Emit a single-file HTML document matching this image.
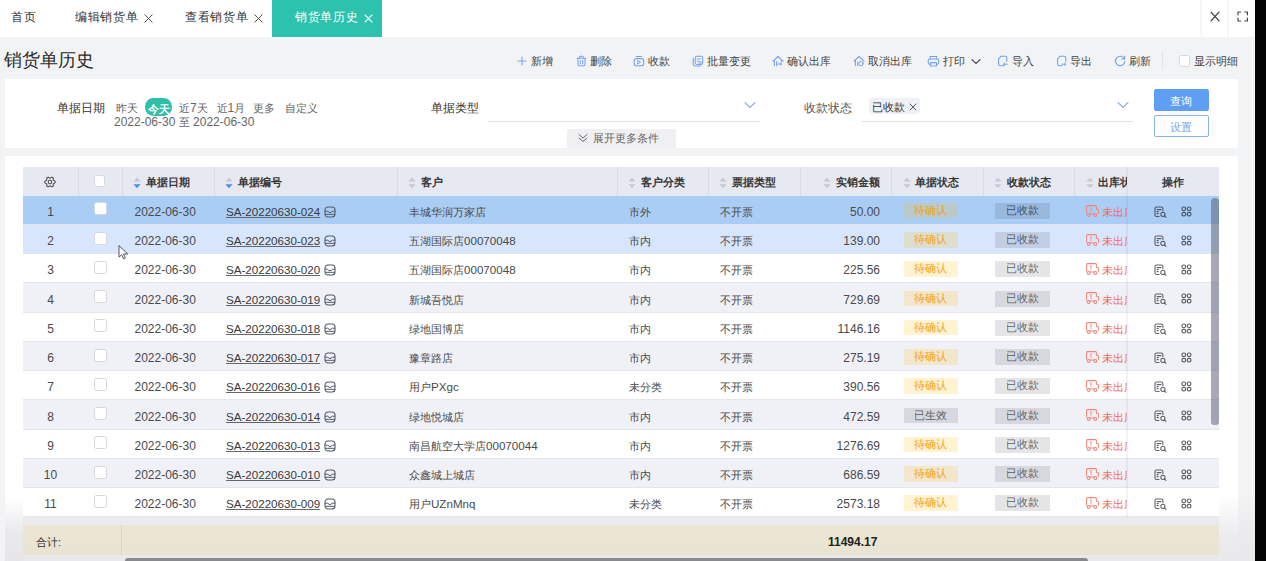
<!DOCTYPE html><html><head><meta charset="utf-8"><style>
*{margin:0;padding:0;box-sizing:border-box}
html,body{width:1266px;height:561px;overflow:hidden;background:#f2f3f5;font-family:"Liberation Sans",sans-serif;color:#333}
div,svg{position:absolute}
.t{white-space:nowrap;font-size:11px;line-height:14px}
.tab{white-space:nowrap;font-size:12px;line-height:15px;color:#333;letter-spacing:0.7px}
.hd{white-space:nowrap;font-size:11px;line-height:14px;font-weight:bold;color:#383838}
.cell{white-space:nowrap;font-size:11px;line-height:14px;color:#4a4a4a}
.tag{font-size:11px;line-height:15.5px;text-align:center;white-space:nowrap}
.cb{background:#fff;border:1px solid #d6d8de;border-radius:2.5px}
</style></head><body>
<div style="left:0px;top:0px;width:1255px;height:37px;background:#fff"></div>
<div class="tab" style="left:11px;top:10.4px;">首页</div>
<div class="tab" style="left:75px;top:10.4px;">编辑销货单</div>
<svg style="left:143.5px;top:14px;" width="9" height="9" viewBox="0 0 9 9" fill="none" stroke-linecap="round" stroke-linejoin="round"><path d="M0.8 0.8L8.2 8.2M8.2 0.8L0.8 8.2" stroke="#555" stroke-width="1"/></svg>
<div class="tab" style="left:185px;top:10.4px;">查看销货单</div>
<svg style="left:253.5px;top:14px;" width="9" height="9" viewBox="0 0 9 9" fill="none" stroke-linecap="round" stroke-linejoin="round"><path d="M0.8 0.8L8.2 8.2M8.2 0.8L0.8 8.2" stroke="#555" stroke-width="1"/></svg>
<div style="left:271.5px;top:0px;width:110px;height:37px;background:#2dc2ae"></div>
<div class="tab" style="left:295px;top:10.4px;color:#fff">销货单历史</div>
<svg style="left:363.5px;top:14px;" width="9" height="9" viewBox="0 0 9 9" fill="none" stroke-linecap="round" stroke-linejoin="round"><path d="M1 1L8 8M8 1L1 8" stroke="#e8faf6" stroke-width="1.1"/></svg>
<div style="left:1199.5px;top:0px;width:2px;height:37px;background:linear-gradient(90deg,#f4f4f4,#fafafa)"></div>
<div style="left:1227px;top:0px;width:2px;height:37px;background:linear-gradient(90deg,#f4f4f4,#fafafa)"></div>
<svg style="left:1210.2px;top:10.6px;" width="10" height="11" viewBox="0 0 10 11" fill="none" stroke-linecap="round" stroke-linejoin="round"><path d="M1 1.2L9 9.8M9 1.2L1 9.8" stroke="#333" stroke-width="1.15"/></svg>
<svg style="left:1236.6px;top:11px;" width="12" height="11" viewBox="0 0 12 11" fill="none" stroke-linecap="round" stroke-linejoin="round"><path d="M1 3.8V1H3.6M7.8 1H10.4V3.8M10.4 7.2V10H7.8M3.6 10H1V7.2" stroke="#444" stroke-width="1.2"/></svg>
<div style="left:1255.4px;top:0px;width:10.6px;height:561px;background:#040404"></div>
<div class="t" style="left:4px;top:50px;font-size:18px;line-height:21px;color:#2a2a2a">销货单历史</div>
<svg style="left:516.7px;top:55.8px;" width="10" height="10" viewBox="0 0 10 10" fill="none" stroke-linecap="round" stroke-linejoin="round"><path d="M5 1V9M1 5H9" stroke="#72a3ec" stroke-width="1.1"/></svg>
<div class="t" style="left:530.5px;top:53.7px;color:#444">新增</div>
<svg style="left:575.5px;top:54.6px;" width="11" height="12" viewBox="0 0 11 12" fill="none" stroke-linecap="round" stroke-linejoin="round"><path d="M3.6 3V2.2Q3.6 1.2 4.6 1.2H6.4Q7.4 1.2 7.4 2.2V3 M1 3.2H10 M2 3.6V9.6Q2 10.8 3.2 10.8H7.8Q9 10.8 9 9.6V3.6 M4.3 5.6V8.6 M6.7 5.6V8.6" stroke="#72a3ec" stroke-width="1.05"/></svg>
<div class="t" style="left:590px;top:53.7px;color:#444">删除</div>
<svg style="left:633.2px;top:54.7px;" width="12" height="12" viewBox="0 0 12 12" fill="none" stroke-linecap="round" stroke-linejoin="round"><path d="M3.2 1.5H8.8" stroke="#72a3ec" stroke-width="1.1"/><rect x="1.3" y="3.6" width="9.4" height="7.2" rx="2" stroke="#72a3ec" stroke-width="1.1"/><path d="M5 5.6L7.6 7.2L5 8.8Z" stroke="#72a3ec" stroke-width="0.9"/></svg>
<div class="t" style="left:648px;top:53.7px;color:#444">收款</div>
<svg style="left:691.5px;top:54.8px;" width="12" height="12" viewBox="0 0 12 12" fill="none" stroke-linecap="round" stroke-linejoin="round"><rect x="3.2" y="1.2" width="7.6" height="8.2" rx="1.6" stroke="#72a3ec" stroke-width="1.05"/><path d="M1.2 3.2V9.4Q1.2 11 2.8 11H8.6" stroke="#72a3ec" stroke-width="1.05"/><path d="M5.2 4H8.4M5.2 6.2H6.6" stroke="#72a3ec" stroke-width="0.9"/><circle cx="8" cy="7.6" r="1.3" stroke="#72a3ec" stroke-width="0.8"/></svg>
<div class="t" style="left:707px;top:53.7px;color:#444">批量变更</div>
<svg style="left:772.2px;top:54.6px;" width="12" height="12" viewBox="0 0 12 12" fill="none" stroke-linecap="round" stroke-linejoin="round"><path d="M1 6.2L6 1.5L11 6.2 M2.4 5V10.8 M9.6 5V6.6" stroke="#72a3ec" stroke-width="1.05"/><path d="M4.6 9H9.6 M8.2 7.6L9.6 9L8.2 10.4" stroke="#72a3ec" stroke-width="0.95"/><path d="M4.6 6.5V11" stroke="#72a3ec" stroke-width="0.9"/></svg>
<div class="t" style="left:787px;top:53.7px;color:#444">确认出库</div>
<svg style="left:852.8px;top:54.6px;" width="12" height="12" viewBox="0 0 12 12" fill="none" stroke-linecap="round" stroke-linejoin="round"><path d="M1 6.2L6 1.5L11 6.2 M2.4 5V10.8" stroke="#72a3ec" stroke-width="1.05"/><circle cx="8" cy="8.6" r="2.2" stroke="#72a3ec" stroke-width="0.95"/><path d="M4.6 7V11" stroke="#72a3ec" stroke-width="0.9"/></svg>
<div class="t" style="left:868px;top:53.7px;color:#444">取消出库</div>
<svg style="left:927.2px;top:54.6px;" width="13" height="12" viewBox="0 0 13 12" fill="none" stroke-linecap="round" stroke-linejoin="round"><path d="M3.2 4V1.4H9.8V4" stroke="#72a3ec" stroke-width="1.05"/><rect x="1.2" y="4" width="10.6" height="5.4" rx="1.8" stroke="#72a3ec" stroke-width="1.1"/><path d="M3.6 7.6H9.4V10.9H3.6Z" fill="#f2f3f5" stroke="#72a3ec" stroke-width="1.05"/></svg>
<div class="t" style="left:943px;top:53.7px;color:#444">打印</div>
<svg style="left:971px;top:57.5px;" width="10" height="7" viewBox="0 0 10 7" fill="none" stroke-linecap="round" stroke-linejoin="round"><path d="M1 1.5L5 5.5L9 1.5" stroke="#555" stroke-width="1.1"/></svg>
<svg style="left:997.2px;top:54.6px;" width="11" height="12" viewBox="0 0 11 12" fill="none" stroke-linecap="round" stroke-linejoin="round"><path d="M6.5 10.8H3.4Q1.6 10.8 1.6 9V3.8L4.2 1.2H8.2Q9.8 1.2 9.8 2.8V6.2" stroke="#72a3ec" stroke-width="1.1"/><path d="M10.2 9.2H6.4 M7.8 7.8L6.4 9.2L7.8 10.6" stroke="#72a3ec" stroke-width="1"/></svg>
<div class="t" style="left:1012px;top:53.7px;color:#444">导入</div>
<svg style="left:1056px;top:54.6px;" width="11" height="12" viewBox="0 0 11 12" fill="none" stroke-linecap="round" stroke-linejoin="round"><path d="M6 10.8H3.4Q1.6 10.8 1.6 9V3.8L4.2 1.2H8.2Q9.8 1.2 9.8 2.8V6.2" stroke="#72a3ec" stroke-width="1.1"/><path d="M5.8 9.2H9.8 M8.4 7.8L9.8 9.2L8.4 10.6" stroke="#72a3ec" stroke-width="1"/></svg>
<div class="t" style="left:1070px;top:53.7px;color:#444">导出</div>
<svg style="left:1114.2px;top:55.2px;" width="12" height="12" viewBox="0 0 12 12" fill="none" stroke-linecap="round" stroke-linejoin="round"><path d="M10.2 3.6A4.7 4.7 0 1 0 10.8 6.6" stroke="#72a3ec" stroke-width="1.15"/><path d="M10.6 1.2V4H7.8" stroke="#72a3ec" stroke-width="1.1"/></svg>
<div class="t" style="left:1129px;top:53.7px;color:#444">刷新</div>
<div style="left:1162px;top:51px;width:1px;height:19px;background:#e3e4e8"></div>
<div class="cb" style="left:1178.5px;top:54.5px;width:11.5px;height:12px;"></div>
<div class="t" style="left:1194px;top:53.7px;color:#444">显示明细</div>
<div style="left:5px;top:79px;width:1233px;height:68.5px;background:#fff"></div>
<div class="t" style="left:57px;top:101px;color:#333;font-size:11.5px">单据日期</div>
<div class="t" style="left:116px;top:101px;color:#666">昨天</div>
<div style="left:144.8px;top:98px;width:27px;height:17.5px;background:#2fbfa9;border-radius:8.5px"></div>
<div class="t" style="left:147.5px;top:101.8px;color:#fff;font-weight:bold">今天</div>
<div class="t" style="left:179px;top:101px;color:#666">近<span style="font-size:12px">7</span>天</div>
<div class="t" style="left:216.5px;top:101px;color:#666">近<span style="font-size:12px">1</span>月</div>
<div class="t" style="left:253.2px;top:101px;color:#666">更多</div>
<div class="t" style="left:285px;top:101px;color:#666">自定义</div>
<div class="t" style="left:114px;top:114.5px;color:#666"><span style="font-size:12px">2022-06-30 </span>至<span style="font-size:12px"> 2022-06-30</span></div>
<div class="t" style="left:431px;top:101px;color:#333;font-size:11.5px">单据类型</div>
<div style="left:488px;top:121px;width:272px;height:1px;background:#dfe1e6"></div>
<svg style="left:743.5px;top:101px;" width="12" height="8" viewBox="0 0 12 8" fill="none" stroke-linecap="round" stroke-linejoin="round"><path d="M1 1.5L6 6.5L11 1.5" stroke="#8fb2e6" stroke-width="1.1"/></svg>
<div style="left:566.5px;top:129px;width:109.5px;height:18.5px;background:#f0f0f2;border-radius:2px 2px 0 0"></div>
<svg style="left:578px;top:133px;" width="10" height="10" viewBox="0 0 10 10" fill="none" stroke-linecap="round" stroke-linejoin="round"><path d="M1 1.5L5 5L9 1.5M1 5L5 8.5L9 5" stroke="#666" stroke-width="1"/></svg>
<div class="t" style="left:593px;top:131px;color:#666">展开更多条件</div>
<div class="t" style="left:804px;top:101px;color:#555;font-size:11.5px">收款状态</div>
<div style="left:869px;top:97.5px;width:51px;height:16px;background:#eef1f7;border-radius:3px"></div>
<div class="t" style="left:872px;top:99.5px;color:#333">已收款</div>
<svg style="left:909px;top:103px;" width="8" height="8" viewBox="0 0 8 8" fill="none" stroke-linecap="round" stroke-linejoin="round"><path d="M1 1L7 7M7 1L1 7" stroke="#555" stroke-width="1"/></svg>
<div style="left:862px;top:121px;width:271px;height:1px;background:#dfe1e6"></div>
<svg style="left:1117px;top:101px;" width="12" height="8" viewBox="0 0 12 8" fill="none" stroke-linecap="round" stroke-linejoin="round"><path d="M1 1.5L6 6.5L11 1.5" stroke="#8fb2e6" stroke-width="1.1"/></svg>
<div style="left:1154px;top:89px;width:54.5px;height:22px;background:#5f9ff3;border-radius:2px"></div>
<div class="t" style="left:1170px;top:93.5px;color:#fff">查询</div>
<div style="left:1154px;top:114.5px;width:54.5px;height:22.5px;background:#fff;border:1px solid #86b4f0;border-radius:2px"></div>
<div class="t" style="left:1170px;top:120px;color:#7aa8e8">设置</div>
<div style="left:5px;top:156px;width:1233px;height:405px;background:#fff"></div>
<div style="left:23px;top:167px;width:1196px;height:28.5px;background:#e7e9f2"></div>
<div style="left:78px;top:167px;width:1px;height:28.5px;background:#d8dbe5"></div>
<div style="left:121.5px;top:167px;width:1px;height:28.5px;background:#d8dbe5"></div>
<div style="left:213.5px;top:167px;width:1px;height:28.5px;background:#d8dbe5"></div>
<div style="left:397px;top:167px;width:1px;height:28.5px;background:#d8dbe5"></div>
<div style="left:616.5px;top:167px;width:1px;height:28.5px;background:#d8dbe5"></div>
<div style="left:708px;top:167px;width:1px;height:28.5px;background:#d8dbe5"></div>
<div style="left:800px;top:167px;width:1px;height:28.5px;background:#d8dbe5"></div>
<div style="left:891px;top:167px;width:1px;height:28.5px;background:#d8dbe5"></div>
<div style="left:982.5px;top:167px;width:1px;height:28.5px;background:#d8dbe5"></div>
<div style="left:1074px;top:167px;width:1px;height:28.5px;background:#d8dbe5"></div>
<svg style="left:44.4px;top:175.6px;" width="12" height="12" viewBox="0 0 12 12" fill="none" stroke-linecap="round" stroke-linejoin="round"><path d="M11.30 6.00L11.18 6.45L10.85 6.86L10.39 7.18L9.92 7.43L9.54 7.65L9.29 7.90L9.20 8.24L9.20 8.68L9.22 9.22L9.17 9.77L8.98 10.26L8.65 10.59L8.20 10.71L7.68 10.63L7.18 10.39L6.72 10.11L6.34 9.89L6.00 9.80L5.66 9.89L5.28 10.11L4.82 10.39L4.32 10.63L3.80 10.71L3.35 10.59L3.02 10.26L2.83 9.77L2.78 9.22L2.80 8.68L2.80 8.24L2.71 7.90L2.46 7.65L2.08 7.43L1.61 7.18L1.15 6.86L0.82 6.45L0.70 6.00L0.82 5.55L1.15 5.14L1.61 4.82L2.08 4.57L2.46 4.35L2.71 4.10L2.80 3.76L2.80 3.32L2.78 2.78L2.83 2.23L3.02 1.74L3.35 1.41L3.80 1.29L4.32 1.37L4.82 1.61L5.28 1.89L5.66 2.11L6.00 2.20L6.34 2.11L6.72 1.89L7.18 1.61L7.68 1.37L8.20 1.29L8.65 1.41L8.98 1.74L9.17 2.23L9.22 2.78L9.20 3.32L9.20 3.76L9.29 4.10L9.54 4.35L9.92 4.57L10.39 4.82L10.85 5.14L11.18 5.55Z" stroke="#505050" stroke-width="1.1"/><circle cx="6" cy="6" r="1.8" stroke="#505050" stroke-width="1.05"/></svg>
<div class="cb" style="left:93.5px;top:175.2px;width:11.8px;height:12.3px;"></div>
<svg style="left:132.5px;top:176.8px;" width="8" height="12" viewBox="0 0 8 12" fill="none" stroke-linecap="round" stroke-linejoin="round"><path d="M0.4 4.4L4 0.4L7.6 4.4Z" fill="#c6c9d0"/><path d="M0.4 7.2L4 11.3L7.6 7.2Z" fill="#4a90e8"/></svg>
<div class="hd" style="left:145.5px;top:174.7px;">单据日期</div>
<svg style="left:224.5px;top:176.8px;" width="8" height="12" viewBox="0 0 8 12" fill="none" stroke-linecap="round" stroke-linejoin="round"><path d="M0.4 4.4L4 0.4L7.6 4.4Z" fill="#c6c9d0"/><path d="M0.4 7.2L4 11.3L7.6 7.2Z" fill="#4a90e8"/></svg>
<div class="hd" style="left:237.5px;top:174.7px;">单据编号</div>
<svg style="left:408px;top:176.8px;" width="8" height="12" viewBox="0 0 8 12" fill="none" stroke-linecap="round" stroke-linejoin="round"><path d="M0.4 4.4L4 0.4L7.6 4.4Z" fill="#c6c9d0"/><path d="M0.4 7.2L4 11.3L7.6 7.2Z" fill="#c6c9d0"/></svg>
<div class="hd" style="left:420.5px;top:174.7px;">客户</div>
<svg style="left:627.5px;top:176.8px;" width="8" height="12" viewBox="0 0 8 12" fill="none" stroke-linecap="round" stroke-linejoin="round"><path d="M0.4 4.4L4 0.4L7.6 4.4Z" fill="#c6c9d0"/><path d="M0.4 7.2L4 11.3L7.6 7.2Z" fill="#c6c9d0"/></svg>
<div class="hd" style="left:640.5px;top:174.7px;">客户分类</div>
<svg style="left:719px;top:176.8px;" width="8" height="12" viewBox="0 0 8 12" fill="none" stroke-linecap="round" stroke-linejoin="round"><path d="M0.4 4.4L4 0.4L7.6 4.4Z" fill="#c6c9d0"/><path d="M0.4 7.2L4 11.3L7.6 7.2Z" fill="#c6c9d0"/></svg>
<div class="hd" style="left:732px;top:174.7px;">票据类型</div>
<svg style="left:822.5px;top:176.8px;" width="8" height="12" viewBox="0 0 8 12" fill="none" stroke-linecap="round" stroke-linejoin="round"><path d="M0.4 4.4L4 0.4L7.6 4.4Z" fill="#c6c9d0"/><path d="M0.4 7.2L4 11.3L7.6 7.2Z" fill="#c6c9d0"/></svg>
<div class="hd" style="left:835.5px;top:174.7px;">实销金额</div>
<svg style="left:902.5px;top:176.8px;" width="8" height="12" viewBox="0 0 8 12" fill="none" stroke-linecap="round" stroke-linejoin="round"><path d="M0.4 4.4L4 0.4L7.6 4.4Z" fill="#c6c9d0"/><path d="M0.4 7.2L4 11.3L7.6 7.2Z" fill="#c6c9d0"/></svg>
<div class="hd" style="left:914.5px;top:174.7px;">单据状态</div>
<svg style="left:994px;top:176.8px;" width="8" height="12" viewBox="0 0 8 12" fill="none" stroke-linecap="round" stroke-linejoin="round"><path d="M0.4 4.4L4 0.4L7.6 4.4Z" fill="#c6c9d0"/><path d="M0.4 7.2L4 11.3L7.6 7.2Z" fill="#c6c9d0"/></svg>
<div class="hd" style="left:1007px;top:174.7px;">收款状态</div>
<svg style="left:1086px;top:176.8px;" width="8" height="12" viewBox="0 0 8 12" fill="none" stroke-linecap="round" stroke-linejoin="round"><path d="M0.4 4.4L4 0.4L7.6 4.4Z" fill="#c6c9d0"/><path d="M0.4 7.2L4 11.3L7.6 7.2Z" fill="#c6c9d0"/></svg>
<div class="hd" style="left:1098px;top:174.7px;">出库状态</div>
<div style="left:23px;top:195.5px;width:1196px;height:29.25px;background:#aacdf5"></div>
<div style="left:23px;top:223.75px;width:1196px;height:1px;background:#e4e6ec"></div>
<div class="cell" style="left:23px;top:204.8px;width:55px;text-align:center;font-size:12px">1</div>
<div class="cb" style="left:93.8px;top:202.3px;width:12.8px;height:13px;"></div>
<div class="cell" style="left:134.5px;top:204.8px;font-size:12px">2022-06-30</div>
<div class="cell" style="left:226px;top:204.8px;text-decoration:underline;text-underline-offset:1px;text-decoration-color:#666;color:#3a3a3a;font-size:11.6px">SA-20220630-024</div>
<svg style="left:324px;top:205.8px;" width="12" height="12" viewBox="0 0 12 12" fill="none" stroke-linecap="round" stroke-linejoin="round"><rect x="1" y="1" width="10" height="10" rx="3" stroke="#505866" stroke-width="1.05"/><path d="M1.2 5.2H3.4Q6 8.2 8.6 5.2H10.8 M1.5 8.3H10.5" stroke="#505866" stroke-width="1"/></svg>
<div class="cell" style="left:409px;top:204.8px;">丰城华润万家店</div>
<div class="cell" style="left:629px;top:204.8px;">市外</div>
<div class="cell" style="left:720px;top:204.8px;">不开票</div>
<div class="cell" style="left:780px;top:204.8px;width:100px;text-align:right;font-size:12px">50.00</div>
<div class="tag" style="left:904px;top:202.8px;width:53.5px;height:15.5px;background:rgba(255,190,0,0.18);color:#f4a11f;">待确认</div>
<div class="tag" style="left:995px;top:202.8px;width:55px;height:16px;background:rgba(0,0,20,0.1);color:rgba(0,0,0,0.6);">已收款</div>
<svg style="left:1085px;top:203.6px;" width="15" height="14" viewBox="0 0 15 14" fill="none" stroke-linecap="round" stroke-linejoin="round"><path d="M4.2 10H9.2 M1.6 9V2.6Q1.6 1.6 2.6 1.6H10.4Q11.4 1.6 11.4 2.6V5.2H12Q13.6 5.2 13.6 6.8V9.2" stroke="#f2857a" stroke-width="1.05"/><circle cx="3.6" cy="10.9" r="1.45" stroke="#f2857a" stroke-width="1.05"/><circle cx="10.3" cy="10.9" r="1.45" stroke="#f2857a" stroke-width="1.05"/><path d="M6 3.6V6M6 7.6V7.8" stroke="#f2857a" stroke-width="1.1"/></svg>
<div class="cell" style="left:1101.5px;top:204.8px;color:#f06b5c;width:26px;overflow:hidden">未出库</div>
<div style="left:1127px;top:195.5px;width:92px;height:28.25px;background:#aacdf5"></div>
<svg style="left:1153.8px;top:205.7px;" width="13" height="12" viewBox="0 0 13 12" fill="none" stroke-linecap="round" stroke-linejoin="round"><path d="M8.9 4.6V2.6Q8.9 1 7.3 1H2.6Q1 1 1 2.6V8.9Q1 10.5 2.6 10.5H5" stroke="rgba(40,42,48,0.72)" stroke-width="1.1"/><path d="M3.1 3.6H7M3.1 5.6H4.2M3.1 7.6H4.2" stroke="rgba(40,42,48,0.72)" stroke-width="1.15"/><circle cx="8.9" cy="8.3" r="2.1" stroke="rgba(40,42,48,0.72)" stroke-width="1.05"/><path d="M10.5 9.9L11.9 11.3" stroke="rgba(40,42,48,0.72)" stroke-width="1.1"/></svg>
<svg style="left:1180.6px;top:205.6px;" width="11" height="11" viewBox="0 0 11 11" fill="none" stroke-linecap="round" stroke-linejoin="round"><rect x="1" y="1" width="3.6" height="3.6" rx="1.5" stroke="rgba(40,42,48,0.72)" stroke-width="1.2"/><rect x="6.3" y="1" width="3.6" height="3.6" rx="1.5" stroke="rgba(40,42,48,0.72)" stroke-width="1.2"/><rect x="1" y="6.3" width="3.6" height="3.6" rx="1.5" stroke="rgba(40,42,48,0.72)" stroke-width="1.2"/><rect x="6.3" y="6.3" width="3.6" height="3.6" rx="1.5" stroke="rgba(40,42,48,0.72)" stroke-width="1.2"/></svg>
<div style="left:23px;top:224.75px;width:1196px;height:29.25px;background:#d7e6fc"></div>
<div style="left:23px;top:253.0px;width:1196px;height:1px;background:#e4e6ec"></div>
<div class="cell" style="left:23px;top:234.05px;width:55px;text-align:center;font-size:12px">2</div>
<div class="cb" style="left:93.8px;top:231.55px;width:12.8px;height:13px;"></div>
<div class="cell" style="left:134.5px;top:234.05px;font-size:12px">2022-06-30</div>
<div class="cell" style="left:226px;top:234.05px;text-decoration:underline;text-underline-offset:1px;text-decoration-color:#666;color:#3a3a3a;font-size:11.6px">SA-20220630-023</div>
<svg style="left:324px;top:235.05px;" width="12" height="12" viewBox="0 0 12 12" fill="none" stroke-linecap="round" stroke-linejoin="round"><rect x="1" y="1" width="10" height="10" rx="3" stroke="#505866" stroke-width="1.05"/><path d="M1.2 5.2H3.4Q6 8.2 8.6 5.2H10.8 M1.5 8.3H10.5" stroke="#505866" stroke-width="1"/></svg>
<div class="cell" style="left:409px;top:234.05px;">五湖国际店<span style="font-size:11.6px">00070048</span></div>
<div class="cell" style="left:629px;top:234.05px;">市内</div>
<div class="cell" style="left:720px;top:234.05px;">不开票</div>
<div class="cell" style="left:780px;top:234.05px;width:100px;text-align:right;font-size:12px">139.00</div>
<div class="tag" style="left:904px;top:232.05px;width:53.5px;height:15.5px;background:rgba(255,190,0,0.18);color:#f4a11f;">待确认</div>
<div class="tag" style="left:995px;top:232.05px;width:55px;height:16px;background:rgba(0,0,20,0.1);color:rgba(0,0,0,0.6);">已收款</div>
<svg style="left:1085px;top:232.85px;" width="15" height="14" viewBox="0 0 15 14" fill="none" stroke-linecap="round" stroke-linejoin="round"><path d="M4.2 10H9.2 M1.6 9V2.6Q1.6 1.6 2.6 1.6H10.4Q11.4 1.6 11.4 2.6V5.2H12Q13.6 5.2 13.6 6.8V9.2" stroke="#f2857a" stroke-width="1.05"/><circle cx="3.6" cy="10.9" r="1.45" stroke="#f2857a" stroke-width="1.05"/><circle cx="10.3" cy="10.9" r="1.45" stroke="#f2857a" stroke-width="1.05"/><path d="M6 3.6V6M6 7.6V7.8" stroke="#f2857a" stroke-width="1.1"/></svg>
<div class="cell" style="left:1101.5px;top:234.05px;color:#f06b5c;width:26px;overflow:hidden">未出库</div>
<div style="left:1127px;top:224.75px;width:92px;height:28.25px;background:#d7e6fc"></div>
<svg style="left:1153.8px;top:234.95px;" width="13" height="12" viewBox="0 0 13 12" fill="none" stroke-linecap="round" stroke-linejoin="round"><path d="M8.9 4.6V2.6Q8.9 1 7.3 1H2.6Q1 1 1 2.6V8.9Q1 10.5 2.6 10.5H5" stroke="rgba(40,42,48,0.72)" stroke-width="1.1"/><path d="M3.1 3.6H7M3.1 5.6H4.2M3.1 7.6H4.2" stroke="rgba(40,42,48,0.72)" stroke-width="1.15"/><circle cx="8.9" cy="8.3" r="2.1" stroke="rgba(40,42,48,0.72)" stroke-width="1.05"/><path d="M10.5 9.9L11.9 11.3" stroke="rgba(40,42,48,0.72)" stroke-width="1.1"/></svg>
<svg style="left:1180.6px;top:234.85px;" width="11" height="11" viewBox="0 0 11 11" fill="none" stroke-linecap="round" stroke-linejoin="round"><rect x="1" y="1" width="3.6" height="3.6" rx="1.5" stroke="rgba(40,42,48,0.72)" stroke-width="1.2"/><rect x="6.3" y="1" width="3.6" height="3.6" rx="1.5" stroke="rgba(40,42,48,0.72)" stroke-width="1.2"/><rect x="1" y="6.3" width="3.6" height="3.6" rx="1.5" stroke="rgba(40,42,48,0.72)" stroke-width="1.2"/><rect x="6.3" y="6.3" width="3.6" height="3.6" rx="1.5" stroke="rgba(40,42,48,0.72)" stroke-width="1.2"/></svg>
<div style="left:23px;top:254.0px;width:1196px;height:29.25px;background:#ffffff"></div>
<div style="left:23px;top:282.25px;width:1196px;height:1px;background:#e4e6ec"></div>
<div class="cell" style="left:23px;top:263.3px;width:55px;text-align:center;font-size:12px">3</div>
<div class="cb" style="left:93.8px;top:260.8px;width:12.8px;height:13px;"></div>
<div class="cell" style="left:134.5px;top:263.3px;font-size:12px">2022-06-30</div>
<div class="cell" style="left:226px;top:263.3px;text-decoration:underline;text-underline-offset:1px;text-decoration-color:#666;color:#3a3a3a;font-size:11.6px">SA-20220630-020</div>
<svg style="left:324px;top:264.3px;" width="12" height="12" viewBox="0 0 12 12" fill="none" stroke-linecap="round" stroke-linejoin="round"><rect x="1" y="1" width="10" height="10" rx="3" stroke="#505866" stroke-width="1.05"/><path d="M1.2 5.2H3.4Q6 8.2 8.6 5.2H10.8 M1.5 8.3H10.5" stroke="#505866" stroke-width="1"/></svg>
<div class="cell" style="left:409px;top:263.3px;">五湖国际店<span style="font-size:11.6px">00070048</span></div>
<div class="cell" style="left:629px;top:263.3px;">市内</div>
<div class="cell" style="left:720px;top:263.3px;">不开票</div>
<div class="cell" style="left:780px;top:263.3px;width:100px;text-align:right;font-size:12px">225.56</div>
<div class="tag" style="left:904px;top:261.3px;width:53.5px;height:15.5px;background:rgba(255,190,0,0.18);color:#f4a11f;">待确认</div>
<div class="tag" style="left:995px;top:261.3px;width:55px;height:16px;background:rgba(0,0,20,0.1);color:rgba(0,0,0,0.6);">已收款</div>
<svg style="left:1085px;top:262.1px;" width="15" height="14" viewBox="0 0 15 14" fill="none" stroke-linecap="round" stroke-linejoin="round"><path d="M4.2 10H9.2 M1.6 9V2.6Q1.6 1.6 2.6 1.6H10.4Q11.4 1.6 11.4 2.6V5.2H12Q13.6 5.2 13.6 6.8V9.2" stroke="#f2857a" stroke-width="1.05"/><circle cx="3.6" cy="10.9" r="1.45" stroke="#f2857a" stroke-width="1.05"/><circle cx="10.3" cy="10.9" r="1.45" stroke="#f2857a" stroke-width="1.05"/><path d="M6 3.6V6M6 7.6V7.8" stroke="#f2857a" stroke-width="1.1"/></svg>
<div class="cell" style="left:1101.5px;top:263.3px;color:#f06b5c;width:26px;overflow:hidden">未出库</div>
<div style="left:1127px;top:254.0px;width:92px;height:28.25px;background:#ffffff"></div>
<svg style="left:1153.8px;top:264.2px;" width="13" height="12" viewBox="0 0 13 12" fill="none" stroke-linecap="round" stroke-linejoin="round"><path d="M8.9 4.6V2.6Q8.9 1 7.3 1H2.6Q1 1 1 2.6V8.9Q1 10.5 2.6 10.5H5" stroke="rgba(40,42,48,0.72)" stroke-width="1.1"/><path d="M3.1 3.6H7M3.1 5.6H4.2M3.1 7.6H4.2" stroke="rgba(40,42,48,0.72)" stroke-width="1.15"/><circle cx="8.9" cy="8.3" r="2.1" stroke="rgba(40,42,48,0.72)" stroke-width="1.05"/><path d="M10.5 9.9L11.9 11.3" stroke="rgba(40,42,48,0.72)" stroke-width="1.1"/></svg>
<svg style="left:1180.6px;top:264.1px;" width="11" height="11" viewBox="0 0 11 11" fill="none" stroke-linecap="round" stroke-linejoin="round"><rect x="1" y="1" width="3.6" height="3.6" rx="1.5" stroke="rgba(40,42,48,0.72)" stroke-width="1.2"/><rect x="6.3" y="1" width="3.6" height="3.6" rx="1.5" stroke="rgba(40,42,48,0.72)" stroke-width="1.2"/><rect x="1" y="6.3" width="3.6" height="3.6" rx="1.5" stroke="rgba(40,42,48,0.72)" stroke-width="1.2"/><rect x="6.3" y="6.3" width="3.6" height="3.6" rx="1.5" stroke="rgba(40,42,48,0.72)" stroke-width="1.2"/></svg>
<div style="left:23px;top:283.25px;width:1196px;height:29.25px;background:#f0f1f7"></div>
<div style="left:23px;top:311.5px;width:1196px;height:1px;background:#e4e6ec"></div>
<div class="cell" style="left:23px;top:292.55px;width:55px;text-align:center;font-size:12px">4</div>
<div class="cb" style="left:93.8px;top:290.05px;width:12.8px;height:13px;"></div>
<div class="cell" style="left:134.5px;top:292.55px;font-size:12px">2022-06-30</div>
<div class="cell" style="left:226px;top:292.55px;text-decoration:underline;text-underline-offset:1px;text-decoration-color:#666;color:#3a3a3a;font-size:11.6px">SA-20220630-019</div>
<svg style="left:324px;top:293.55px;" width="12" height="12" viewBox="0 0 12 12" fill="none" stroke-linecap="round" stroke-linejoin="round"><rect x="1" y="1" width="10" height="10" rx="3" stroke="#505866" stroke-width="1.05"/><path d="M1.2 5.2H3.4Q6 8.2 8.6 5.2H10.8 M1.5 8.3H10.5" stroke="#505866" stroke-width="1"/></svg>
<div class="cell" style="left:409px;top:292.55px;">新城吾悦店</div>
<div class="cell" style="left:629px;top:292.55px;">市内</div>
<div class="cell" style="left:720px;top:292.55px;">不开票</div>
<div class="cell" style="left:780px;top:292.55px;width:100px;text-align:right;font-size:12px">729.69</div>
<div class="tag" style="left:904px;top:290.55px;width:53.5px;height:15.5px;background:rgba(255,190,0,0.18);color:#f4a11f;">待确认</div>
<div class="tag" style="left:995px;top:290.55px;width:55px;height:16px;background:rgba(0,0,20,0.1);color:rgba(0,0,0,0.6);">已收款</div>
<svg style="left:1085px;top:291.35px;" width="15" height="14" viewBox="0 0 15 14" fill="none" stroke-linecap="round" stroke-linejoin="round"><path d="M4.2 10H9.2 M1.6 9V2.6Q1.6 1.6 2.6 1.6H10.4Q11.4 1.6 11.4 2.6V5.2H12Q13.6 5.2 13.6 6.8V9.2" stroke="#f2857a" stroke-width="1.05"/><circle cx="3.6" cy="10.9" r="1.45" stroke="#f2857a" stroke-width="1.05"/><circle cx="10.3" cy="10.9" r="1.45" stroke="#f2857a" stroke-width="1.05"/><path d="M6 3.6V6M6 7.6V7.8" stroke="#f2857a" stroke-width="1.1"/></svg>
<div class="cell" style="left:1101.5px;top:292.55px;color:#f06b5c;width:26px;overflow:hidden">未出库</div>
<div style="left:1127px;top:283.25px;width:92px;height:28.25px;background:#f0f1f7"></div>
<svg style="left:1153.8px;top:293.45px;" width="13" height="12" viewBox="0 0 13 12" fill="none" stroke-linecap="round" stroke-linejoin="round"><path d="M8.9 4.6V2.6Q8.9 1 7.3 1H2.6Q1 1 1 2.6V8.9Q1 10.5 2.6 10.5H5" stroke="rgba(40,42,48,0.72)" stroke-width="1.1"/><path d="M3.1 3.6H7M3.1 5.6H4.2M3.1 7.6H4.2" stroke="rgba(40,42,48,0.72)" stroke-width="1.15"/><circle cx="8.9" cy="8.3" r="2.1" stroke="rgba(40,42,48,0.72)" stroke-width="1.05"/><path d="M10.5 9.9L11.9 11.3" stroke="rgba(40,42,48,0.72)" stroke-width="1.1"/></svg>
<svg style="left:1180.6px;top:293.35px;" width="11" height="11" viewBox="0 0 11 11" fill="none" stroke-linecap="round" stroke-linejoin="round"><rect x="1" y="1" width="3.6" height="3.6" rx="1.5" stroke="rgba(40,42,48,0.72)" stroke-width="1.2"/><rect x="6.3" y="1" width="3.6" height="3.6" rx="1.5" stroke="rgba(40,42,48,0.72)" stroke-width="1.2"/><rect x="1" y="6.3" width="3.6" height="3.6" rx="1.5" stroke="rgba(40,42,48,0.72)" stroke-width="1.2"/><rect x="6.3" y="6.3" width="3.6" height="3.6" rx="1.5" stroke="rgba(40,42,48,0.72)" stroke-width="1.2"/></svg>
<div style="left:23px;top:312.5px;width:1196px;height:29.25px;background:#ffffff"></div>
<div style="left:23px;top:340.75px;width:1196px;height:1px;background:#e4e6ec"></div>
<div class="cell" style="left:23px;top:321.8px;width:55px;text-align:center;font-size:12px">5</div>
<div class="cb" style="left:93.8px;top:319.3px;width:12.8px;height:13px;"></div>
<div class="cell" style="left:134.5px;top:321.8px;font-size:12px">2022-06-30</div>
<div class="cell" style="left:226px;top:321.8px;text-decoration:underline;text-underline-offset:1px;text-decoration-color:#666;color:#3a3a3a;font-size:11.6px">SA-20220630-018</div>
<svg style="left:324px;top:322.8px;" width="12" height="12" viewBox="0 0 12 12" fill="none" stroke-linecap="round" stroke-linejoin="round"><rect x="1" y="1" width="10" height="10" rx="3" stroke="#505866" stroke-width="1.05"/><path d="M1.2 5.2H3.4Q6 8.2 8.6 5.2H10.8 M1.5 8.3H10.5" stroke="#505866" stroke-width="1"/></svg>
<div class="cell" style="left:409px;top:321.8px;">绿地国博店</div>
<div class="cell" style="left:629px;top:321.8px;">市内</div>
<div class="cell" style="left:720px;top:321.8px;">不开票</div>
<div class="cell" style="left:780px;top:321.8px;width:100px;text-align:right;font-size:12px">1146.16</div>
<div class="tag" style="left:904px;top:319.8px;width:53.5px;height:15.5px;background:rgba(255,190,0,0.18);color:#f4a11f;">待确认</div>
<div class="tag" style="left:995px;top:319.8px;width:55px;height:16px;background:rgba(0,0,20,0.1);color:rgba(0,0,0,0.6);">已收款</div>
<svg style="left:1085px;top:320.6px;" width="15" height="14" viewBox="0 0 15 14" fill="none" stroke-linecap="round" stroke-linejoin="round"><path d="M4.2 10H9.2 M1.6 9V2.6Q1.6 1.6 2.6 1.6H10.4Q11.4 1.6 11.4 2.6V5.2H12Q13.6 5.2 13.6 6.8V9.2" stroke="#f2857a" stroke-width="1.05"/><circle cx="3.6" cy="10.9" r="1.45" stroke="#f2857a" stroke-width="1.05"/><circle cx="10.3" cy="10.9" r="1.45" stroke="#f2857a" stroke-width="1.05"/><path d="M6 3.6V6M6 7.6V7.8" stroke="#f2857a" stroke-width="1.1"/></svg>
<div class="cell" style="left:1101.5px;top:321.8px;color:#f06b5c;width:26px;overflow:hidden">未出库</div>
<div style="left:1127px;top:312.5px;width:92px;height:28.25px;background:#ffffff"></div>
<svg style="left:1153.8px;top:322.7px;" width="13" height="12" viewBox="0 0 13 12" fill="none" stroke-linecap="round" stroke-linejoin="round"><path d="M8.9 4.6V2.6Q8.9 1 7.3 1H2.6Q1 1 1 2.6V8.9Q1 10.5 2.6 10.5H5" stroke="rgba(40,42,48,0.72)" stroke-width="1.1"/><path d="M3.1 3.6H7M3.1 5.6H4.2M3.1 7.6H4.2" stroke="rgba(40,42,48,0.72)" stroke-width="1.15"/><circle cx="8.9" cy="8.3" r="2.1" stroke="rgba(40,42,48,0.72)" stroke-width="1.05"/><path d="M10.5 9.9L11.9 11.3" stroke="rgba(40,42,48,0.72)" stroke-width="1.1"/></svg>
<svg style="left:1180.6px;top:322.6px;" width="11" height="11" viewBox="0 0 11 11" fill="none" stroke-linecap="round" stroke-linejoin="round"><rect x="1" y="1" width="3.6" height="3.6" rx="1.5" stroke="rgba(40,42,48,0.72)" stroke-width="1.2"/><rect x="6.3" y="1" width="3.6" height="3.6" rx="1.5" stroke="rgba(40,42,48,0.72)" stroke-width="1.2"/><rect x="1" y="6.3" width="3.6" height="3.6" rx="1.5" stroke="rgba(40,42,48,0.72)" stroke-width="1.2"/><rect x="6.3" y="6.3" width="3.6" height="3.6" rx="1.5" stroke="rgba(40,42,48,0.72)" stroke-width="1.2"/></svg>
<div style="left:23px;top:341.75px;width:1196px;height:29.25px;background:#f0f1f7"></div>
<div style="left:23px;top:370.0px;width:1196px;height:1px;background:#e4e6ec"></div>
<div class="cell" style="left:23px;top:351.05px;width:55px;text-align:center;font-size:12px">6</div>
<div class="cb" style="left:93.8px;top:348.55px;width:12.8px;height:13px;"></div>
<div class="cell" style="left:134.5px;top:351.05px;font-size:12px">2022-06-30</div>
<div class="cell" style="left:226px;top:351.05px;text-decoration:underline;text-underline-offset:1px;text-decoration-color:#666;color:#3a3a3a;font-size:11.6px">SA-20220630-017</div>
<svg style="left:324px;top:352.05px;" width="12" height="12" viewBox="0 0 12 12" fill="none" stroke-linecap="round" stroke-linejoin="round"><rect x="1" y="1" width="10" height="10" rx="3" stroke="#505866" stroke-width="1.05"/><path d="M1.2 5.2H3.4Q6 8.2 8.6 5.2H10.8 M1.5 8.3H10.5" stroke="#505866" stroke-width="1"/></svg>
<div class="cell" style="left:409px;top:351.05px;">豫章路店</div>
<div class="cell" style="left:629px;top:351.05px;">市内</div>
<div class="cell" style="left:720px;top:351.05px;">不开票</div>
<div class="cell" style="left:780px;top:351.05px;width:100px;text-align:right;font-size:12px">275.19</div>
<div class="tag" style="left:904px;top:349.05px;width:53.5px;height:15.5px;background:rgba(255,190,0,0.18);color:#f4a11f;">待确认</div>
<div class="tag" style="left:995px;top:349.05px;width:55px;height:16px;background:rgba(0,0,20,0.1);color:rgba(0,0,0,0.6);">已收款</div>
<svg style="left:1085px;top:349.85px;" width="15" height="14" viewBox="0 0 15 14" fill="none" stroke-linecap="round" stroke-linejoin="round"><path d="M4.2 10H9.2 M1.6 9V2.6Q1.6 1.6 2.6 1.6H10.4Q11.4 1.6 11.4 2.6V5.2H12Q13.6 5.2 13.6 6.8V9.2" stroke="#f2857a" stroke-width="1.05"/><circle cx="3.6" cy="10.9" r="1.45" stroke="#f2857a" stroke-width="1.05"/><circle cx="10.3" cy="10.9" r="1.45" stroke="#f2857a" stroke-width="1.05"/><path d="M6 3.6V6M6 7.6V7.8" stroke="#f2857a" stroke-width="1.1"/></svg>
<div class="cell" style="left:1101.5px;top:351.05px;color:#f06b5c;width:26px;overflow:hidden">未出库</div>
<div style="left:1127px;top:341.75px;width:92px;height:28.25px;background:#f0f1f7"></div>
<svg style="left:1153.8px;top:351.95px;" width="13" height="12" viewBox="0 0 13 12" fill="none" stroke-linecap="round" stroke-linejoin="round"><path d="M8.9 4.6V2.6Q8.9 1 7.3 1H2.6Q1 1 1 2.6V8.9Q1 10.5 2.6 10.5H5" stroke="rgba(40,42,48,0.72)" stroke-width="1.1"/><path d="M3.1 3.6H7M3.1 5.6H4.2M3.1 7.6H4.2" stroke="rgba(40,42,48,0.72)" stroke-width="1.15"/><circle cx="8.9" cy="8.3" r="2.1" stroke="rgba(40,42,48,0.72)" stroke-width="1.05"/><path d="M10.5 9.9L11.9 11.3" stroke="rgba(40,42,48,0.72)" stroke-width="1.1"/></svg>
<svg style="left:1180.6px;top:351.85px;" width="11" height="11" viewBox="0 0 11 11" fill="none" stroke-linecap="round" stroke-linejoin="round"><rect x="1" y="1" width="3.6" height="3.6" rx="1.5" stroke="rgba(40,42,48,0.72)" stroke-width="1.2"/><rect x="6.3" y="1" width="3.6" height="3.6" rx="1.5" stroke="rgba(40,42,48,0.72)" stroke-width="1.2"/><rect x="1" y="6.3" width="3.6" height="3.6" rx="1.5" stroke="rgba(40,42,48,0.72)" stroke-width="1.2"/><rect x="6.3" y="6.3" width="3.6" height="3.6" rx="1.5" stroke="rgba(40,42,48,0.72)" stroke-width="1.2"/></svg>
<div style="left:23px;top:371.0px;width:1196px;height:29.25px;background:#ffffff"></div>
<div style="left:23px;top:399.25px;width:1196px;height:1px;background:#e4e6ec"></div>
<div class="cell" style="left:23px;top:380.3px;width:55px;text-align:center;font-size:12px">7</div>
<div class="cb" style="left:93.8px;top:377.8px;width:12.8px;height:13px;"></div>
<div class="cell" style="left:134.5px;top:380.3px;font-size:12px">2022-06-30</div>
<div class="cell" style="left:226px;top:380.3px;text-decoration:underline;text-underline-offset:1px;text-decoration-color:#666;color:#3a3a3a;font-size:11.6px">SA-20220630-016</div>
<svg style="left:324px;top:381.3px;" width="12" height="12" viewBox="0 0 12 12" fill="none" stroke-linecap="round" stroke-linejoin="round"><rect x="1" y="1" width="10" height="10" rx="3" stroke="#505866" stroke-width="1.05"/><path d="M1.2 5.2H3.4Q6 8.2 8.6 5.2H10.8 M1.5 8.3H10.5" stroke="#505866" stroke-width="1"/></svg>
<div class="cell" style="left:409px;top:380.3px;">用户<span style="font-size:11.6px">PXgc</span></div>
<div class="cell" style="left:629px;top:380.3px;">未分类</div>
<div class="cell" style="left:720px;top:380.3px;">不开票</div>
<div class="cell" style="left:780px;top:380.3px;width:100px;text-align:right;font-size:12px">390.56</div>
<div class="tag" style="left:904px;top:378.3px;width:53.5px;height:15.5px;background:rgba(255,190,0,0.18);color:#f4a11f;">待确认</div>
<div class="tag" style="left:995px;top:378.3px;width:55px;height:16px;background:rgba(0,0,20,0.1);color:rgba(0,0,0,0.6);">已收款</div>
<svg style="left:1085px;top:379.1px;" width="15" height="14" viewBox="0 0 15 14" fill="none" stroke-linecap="round" stroke-linejoin="round"><path d="M4.2 10H9.2 M1.6 9V2.6Q1.6 1.6 2.6 1.6H10.4Q11.4 1.6 11.4 2.6V5.2H12Q13.6 5.2 13.6 6.8V9.2" stroke="#f2857a" stroke-width="1.05"/><circle cx="3.6" cy="10.9" r="1.45" stroke="#f2857a" stroke-width="1.05"/><circle cx="10.3" cy="10.9" r="1.45" stroke="#f2857a" stroke-width="1.05"/><path d="M6 3.6V6M6 7.6V7.8" stroke="#f2857a" stroke-width="1.1"/></svg>
<div class="cell" style="left:1101.5px;top:380.3px;color:#f06b5c;width:26px;overflow:hidden">未出库</div>
<div style="left:1127px;top:371.0px;width:92px;height:28.25px;background:#ffffff"></div>
<svg style="left:1153.8px;top:381.2px;" width="13" height="12" viewBox="0 0 13 12" fill="none" stroke-linecap="round" stroke-linejoin="round"><path d="M8.9 4.6V2.6Q8.9 1 7.3 1H2.6Q1 1 1 2.6V8.9Q1 10.5 2.6 10.5H5" stroke="rgba(40,42,48,0.72)" stroke-width="1.1"/><path d="M3.1 3.6H7M3.1 5.6H4.2M3.1 7.6H4.2" stroke="rgba(40,42,48,0.72)" stroke-width="1.15"/><circle cx="8.9" cy="8.3" r="2.1" stroke="rgba(40,42,48,0.72)" stroke-width="1.05"/><path d="M10.5 9.9L11.9 11.3" stroke="rgba(40,42,48,0.72)" stroke-width="1.1"/></svg>
<svg style="left:1180.6px;top:381.1px;" width="11" height="11" viewBox="0 0 11 11" fill="none" stroke-linecap="round" stroke-linejoin="round"><rect x="1" y="1" width="3.6" height="3.6" rx="1.5" stroke="rgba(40,42,48,0.72)" stroke-width="1.2"/><rect x="6.3" y="1" width="3.6" height="3.6" rx="1.5" stroke="rgba(40,42,48,0.72)" stroke-width="1.2"/><rect x="1" y="6.3" width="3.6" height="3.6" rx="1.5" stroke="rgba(40,42,48,0.72)" stroke-width="1.2"/><rect x="6.3" y="6.3" width="3.6" height="3.6" rx="1.5" stroke="rgba(40,42,48,0.72)" stroke-width="1.2"/></svg>
<div style="left:23px;top:400.25px;width:1196px;height:29.25px;background:#f0f1f7"></div>
<div style="left:23px;top:428.5px;width:1196px;height:1px;background:#e4e6ec"></div>
<div class="cell" style="left:23px;top:409.55px;width:55px;text-align:center;font-size:12px">8</div>
<div class="cb" style="left:93.8px;top:407.05px;width:12.8px;height:13px;"></div>
<div class="cell" style="left:134.5px;top:409.55px;font-size:12px">2022-06-30</div>
<div class="cell" style="left:226px;top:409.55px;text-decoration:underline;text-underline-offset:1px;text-decoration-color:#666;color:#3a3a3a;font-size:11.6px">SA-20220630-014</div>
<svg style="left:324px;top:410.55px;" width="12" height="12" viewBox="0 0 12 12" fill="none" stroke-linecap="round" stroke-linejoin="round"><rect x="1" y="1" width="10" height="10" rx="3" stroke="#505866" stroke-width="1.05"/><path d="M1.2 5.2H3.4Q6 8.2 8.6 5.2H10.8 M1.5 8.3H10.5" stroke="#505866" stroke-width="1"/></svg>
<div class="cell" style="left:409px;top:409.55px;">绿地悦城店</div>
<div class="cell" style="left:629px;top:409.55px;">市内</div>
<div class="cell" style="left:720px;top:409.55px;">不开票</div>
<div class="cell" style="left:780px;top:409.55px;width:100px;text-align:right;font-size:12px">472.59</div>
<div class="tag" style="left:904px;top:407.55px;width:53.5px;height:15.5px;background:rgba(0,0,20,0.1);color:rgba(0,0,0,0.6);">已生效</div>
<div class="tag" style="left:995px;top:407.55px;width:55px;height:16px;background:rgba(0,0,20,0.1);color:rgba(0,0,0,0.6);">已收款</div>
<svg style="left:1085px;top:408.35px;" width="15" height="14" viewBox="0 0 15 14" fill="none" stroke-linecap="round" stroke-linejoin="round"><path d="M4.2 10H9.2 M1.6 9V2.6Q1.6 1.6 2.6 1.6H10.4Q11.4 1.6 11.4 2.6V5.2H12Q13.6 5.2 13.6 6.8V9.2" stroke="#f2857a" stroke-width="1.05"/><circle cx="3.6" cy="10.9" r="1.45" stroke="#f2857a" stroke-width="1.05"/><circle cx="10.3" cy="10.9" r="1.45" stroke="#f2857a" stroke-width="1.05"/><path d="M6 3.6V6M6 7.6V7.8" stroke="#f2857a" stroke-width="1.1"/></svg>
<div class="cell" style="left:1101.5px;top:409.55px;color:#f06b5c;width:26px;overflow:hidden">未出库</div>
<div style="left:1127px;top:400.25px;width:92px;height:28.25px;background:#f0f1f7"></div>
<svg style="left:1153.8px;top:410.45px;" width="13" height="12" viewBox="0 0 13 12" fill="none" stroke-linecap="round" stroke-linejoin="round"><path d="M8.9 4.6V2.6Q8.9 1 7.3 1H2.6Q1 1 1 2.6V8.9Q1 10.5 2.6 10.5H5" stroke="rgba(40,42,48,0.72)" stroke-width="1.1"/><path d="M3.1 3.6H7M3.1 5.6H4.2M3.1 7.6H4.2" stroke="rgba(40,42,48,0.72)" stroke-width="1.15"/><circle cx="8.9" cy="8.3" r="2.1" stroke="rgba(40,42,48,0.72)" stroke-width="1.05"/><path d="M10.5 9.9L11.9 11.3" stroke="rgba(40,42,48,0.72)" stroke-width="1.1"/></svg>
<svg style="left:1180.6px;top:410.35px;" width="11" height="11" viewBox="0 0 11 11" fill="none" stroke-linecap="round" stroke-linejoin="round"><rect x="1" y="1" width="3.6" height="3.6" rx="1.5" stroke="rgba(40,42,48,0.72)" stroke-width="1.2"/><rect x="6.3" y="1" width="3.6" height="3.6" rx="1.5" stroke="rgba(40,42,48,0.72)" stroke-width="1.2"/><rect x="1" y="6.3" width="3.6" height="3.6" rx="1.5" stroke="rgba(40,42,48,0.72)" stroke-width="1.2"/><rect x="6.3" y="6.3" width="3.6" height="3.6" rx="1.5" stroke="rgba(40,42,48,0.72)" stroke-width="1.2"/></svg>
<div style="left:23px;top:429.5px;width:1196px;height:29.25px;background:#ffffff"></div>
<div style="left:23px;top:457.75px;width:1196px;height:1px;background:#e4e6ec"></div>
<div class="cell" style="left:23px;top:438.8px;width:55px;text-align:center;font-size:12px">9</div>
<div class="cb" style="left:93.8px;top:436.3px;width:12.8px;height:13px;"></div>
<div class="cell" style="left:134.5px;top:438.8px;font-size:12px">2022-06-30</div>
<div class="cell" style="left:226px;top:438.8px;text-decoration:underline;text-underline-offset:1px;text-decoration-color:#666;color:#3a3a3a;font-size:11.6px">SA-20220630-013</div>
<svg style="left:324px;top:439.8px;" width="12" height="12" viewBox="0 0 12 12" fill="none" stroke-linecap="round" stroke-linejoin="round"><rect x="1" y="1" width="10" height="10" rx="3" stroke="#505866" stroke-width="1.05"/><path d="M1.2 5.2H3.4Q6 8.2 8.6 5.2H10.8 M1.5 8.3H10.5" stroke="#505866" stroke-width="1"/></svg>
<div class="cell" style="left:409px;top:438.8px;">南昌航空大学店<span style="font-size:11.6px">00070044</span></div>
<div class="cell" style="left:629px;top:438.8px;">市内</div>
<div class="cell" style="left:720px;top:438.8px;">不开票</div>
<div class="cell" style="left:780px;top:438.8px;width:100px;text-align:right;font-size:12px">1276.69</div>
<div class="tag" style="left:904px;top:436.8px;width:53.5px;height:15.5px;background:rgba(255,190,0,0.18);color:#f4a11f;">待确认</div>
<div class="tag" style="left:995px;top:436.8px;width:55px;height:16px;background:rgba(0,0,20,0.1);color:rgba(0,0,0,0.6);">已收款</div>
<svg style="left:1085px;top:437.6px;" width="15" height="14" viewBox="0 0 15 14" fill="none" stroke-linecap="round" stroke-linejoin="round"><path d="M4.2 10H9.2 M1.6 9V2.6Q1.6 1.6 2.6 1.6H10.4Q11.4 1.6 11.4 2.6V5.2H12Q13.6 5.2 13.6 6.8V9.2" stroke="#f2857a" stroke-width="1.05"/><circle cx="3.6" cy="10.9" r="1.45" stroke="#f2857a" stroke-width="1.05"/><circle cx="10.3" cy="10.9" r="1.45" stroke="#f2857a" stroke-width="1.05"/><path d="M6 3.6V6M6 7.6V7.8" stroke="#f2857a" stroke-width="1.1"/></svg>
<div class="cell" style="left:1101.5px;top:438.8px;color:#f06b5c;width:26px;overflow:hidden">未出库</div>
<div style="left:1127px;top:429.5px;width:92px;height:28.25px;background:#ffffff"></div>
<svg style="left:1153.8px;top:439.7px;" width="13" height="12" viewBox="0 0 13 12" fill="none" stroke-linecap="round" stroke-linejoin="round"><path d="M8.9 4.6V2.6Q8.9 1 7.3 1H2.6Q1 1 1 2.6V8.9Q1 10.5 2.6 10.5H5" stroke="rgba(40,42,48,0.72)" stroke-width="1.1"/><path d="M3.1 3.6H7M3.1 5.6H4.2M3.1 7.6H4.2" stroke="rgba(40,42,48,0.72)" stroke-width="1.15"/><circle cx="8.9" cy="8.3" r="2.1" stroke="rgba(40,42,48,0.72)" stroke-width="1.05"/><path d="M10.5 9.9L11.9 11.3" stroke="rgba(40,42,48,0.72)" stroke-width="1.1"/></svg>
<svg style="left:1180.6px;top:439.6px;" width="11" height="11" viewBox="0 0 11 11" fill="none" stroke-linecap="round" stroke-linejoin="round"><rect x="1" y="1" width="3.6" height="3.6" rx="1.5" stroke="rgba(40,42,48,0.72)" stroke-width="1.2"/><rect x="6.3" y="1" width="3.6" height="3.6" rx="1.5" stroke="rgba(40,42,48,0.72)" stroke-width="1.2"/><rect x="1" y="6.3" width="3.6" height="3.6" rx="1.5" stroke="rgba(40,42,48,0.72)" stroke-width="1.2"/><rect x="6.3" y="6.3" width="3.6" height="3.6" rx="1.5" stroke="rgba(40,42,48,0.72)" stroke-width="1.2"/></svg>
<div style="left:23px;top:458.75px;width:1196px;height:29.25px;background:#f0f1f7"></div>
<div style="left:23px;top:487.0px;width:1196px;height:1px;background:#e4e6ec"></div>
<div class="cell" style="left:23px;top:468.05px;width:55px;text-align:center;font-size:12px">10</div>
<div class="cb" style="left:93.8px;top:465.55px;width:12.8px;height:13px;"></div>
<div class="cell" style="left:134.5px;top:468.05px;font-size:12px">2022-06-30</div>
<div class="cell" style="left:226px;top:468.05px;text-decoration:underline;text-underline-offset:1px;text-decoration-color:#666;color:#3a3a3a;font-size:11.6px">SA-20220630-010</div>
<svg style="left:324px;top:469.05px;" width="12" height="12" viewBox="0 0 12 12" fill="none" stroke-linecap="round" stroke-linejoin="round"><rect x="1" y="1" width="10" height="10" rx="3" stroke="#505866" stroke-width="1.05"/><path d="M1.2 5.2H3.4Q6 8.2 8.6 5.2H10.8 M1.5 8.3H10.5" stroke="#505866" stroke-width="1"/></svg>
<div class="cell" style="left:409px;top:468.05px;">众鑫城上城店</div>
<div class="cell" style="left:629px;top:468.05px;">市内</div>
<div class="cell" style="left:720px;top:468.05px;">不开票</div>
<div class="cell" style="left:780px;top:468.05px;width:100px;text-align:right;font-size:12px">686.59</div>
<div class="tag" style="left:904px;top:466.05px;width:53.5px;height:15.5px;background:rgba(255,190,0,0.18);color:#f4a11f;">待确认</div>
<div class="tag" style="left:995px;top:466.05px;width:55px;height:16px;background:rgba(0,0,20,0.1);color:rgba(0,0,0,0.6);">已收款</div>
<svg style="left:1085px;top:466.85px;" width="15" height="14" viewBox="0 0 15 14" fill="none" stroke-linecap="round" stroke-linejoin="round"><path d="M4.2 10H9.2 M1.6 9V2.6Q1.6 1.6 2.6 1.6H10.4Q11.4 1.6 11.4 2.6V5.2H12Q13.6 5.2 13.6 6.8V9.2" stroke="#f2857a" stroke-width="1.05"/><circle cx="3.6" cy="10.9" r="1.45" stroke="#f2857a" stroke-width="1.05"/><circle cx="10.3" cy="10.9" r="1.45" stroke="#f2857a" stroke-width="1.05"/><path d="M6 3.6V6M6 7.6V7.8" stroke="#f2857a" stroke-width="1.1"/></svg>
<div class="cell" style="left:1101.5px;top:468.05px;color:#f06b5c;width:26px;overflow:hidden">未出库</div>
<div style="left:1127px;top:458.75px;width:92px;height:28.25px;background:#f0f1f7"></div>
<svg style="left:1153.8px;top:468.95px;" width="13" height="12" viewBox="0 0 13 12" fill="none" stroke-linecap="round" stroke-linejoin="round"><path d="M8.9 4.6V2.6Q8.9 1 7.3 1H2.6Q1 1 1 2.6V8.9Q1 10.5 2.6 10.5H5" stroke="rgba(40,42,48,0.72)" stroke-width="1.1"/><path d="M3.1 3.6H7M3.1 5.6H4.2M3.1 7.6H4.2" stroke="rgba(40,42,48,0.72)" stroke-width="1.15"/><circle cx="8.9" cy="8.3" r="2.1" stroke="rgba(40,42,48,0.72)" stroke-width="1.05"/><path d="M10.5 9.9L11.9 11.3" stroke="rgba(40,42,48,0.72)" stroke-width="1.1"/></svg>
<svg style="left:1180.6px;top:468.85px;" width="11" height="11" viewBox="0 0 11 11" fill="none" stroke-linecap="round" stroke-linejoin="round"><rect x="1" y="1" width="3.6" height="3.6" rx="1.5" stroke="rgba(40,42,48,0.72)" stroke-width="1.2"/><rect x="6.3" y="1" width="3.6" height="3.6" rx="1.5" stroke="rgba(40,42,48,0.72)" stroke-width="1.2"/><rect x="1" y="6.3" width="3.6" height="3.6" rx="1.5" stroke="rgba(40,42,48,0.72)" stroke-width="1.2"/><rect x="6.3" y="6.3" width="3.6" height="3.6" rx="1.5" stroke="rgba(40,42,48,0.72)" stroke-width="1.2"/></svg>
<div style="left:23px;top:488.0px;width:1196px;height:29.25px;background:#ffffff"></div>
<div style="left:23px;top:516.25px;width:1196px;height:1px;background:#e4e6ec"></div>
<div class="cell" style="left:23px;top:497.3px;width:55px;text-align:center;font-size:12px">11</div>
<div class="cb" style="left:93.8px;top:494.8px;width:12.8px;height:13px;"></div>
<div class="cell" style="left:134.5px;top:497.3px;font-size:12px">2022-06-30</div>
<div class="cell" style="left:226px;top:497.3px;text-decoration:underline;text-underline-offset:1px;text-decoration-color:#666;color:#3a3a3a;font-size:11.6px">SA-20220630-009</div>
<svg style="left:324px;top:498.3px;" width="12" height="12" viewBox="0 0 12 12" fill="none" stroke-linecap="round" stroke-linejoin="round"><rect x="1" y="1" width="10" height="10" rx="3" stroke="#505866" stroke-width="1.05"/><path d="M1.2 5.2H3.4Q6 8.2 8.6 5.2H10.8 M1.5 8.3H10.5" stroke="#505866" stroke-width="1"/></svg>
<div class="cell" style="left:409px;top:497.3px;">用户<span style="font-size:11.6px">UZnMnq</span></div>
<div class="cell" style="left:629px;top:497.3px;">未分类</div>
<div class="cell" style="left:720px;top:497.3px;">不开票</div>
<div class="cell" style="left:780px;top:497.3px;width:100px;text-align:right;font-size:12px">2573.18</div>
<div class="tag" style="left:904px;top:495.3px;width:53.5px;height:15.5px;background:rgba(255,190,0,0.18);color:#f4a11f;">待确认</div>
<div class="tag" style="left:995px;top:495.3px;width:55px;height:16px;background:rgba(0,0,20,0.1);color:rgba(0,0,0,0.6);">已收款</div>
<svg style="left:1085px;top:496.1px;" width="15" height="14" viewBox="0 0 15 14" fill="none" stroke-linecap="round" stroke-linejoin="round"><path d="M4.2 10H9.2 M1.6 9V2.6Q1.6 1.6 2.6 1.6H10.4Q11.4 1.6 11.4 2.6V5.2H12Q13.6 5.2 13.6 6.8V9.2" stroke="#f2857a" stroke-width="1.05"/><circle cx="3.6" cy="10.9" r="1.45" stroke="#f2857a" stroke-width="1.05"/><circle cx="10.3" cy="10.9" r="1.45" stroke="#f2857a" stroke-width="1.05"/><path d="M6 3.6V6M6 7.6V7.8" stroke="#f2857a" stroke-width="1.1"/></svg>
<div class="cell" style="left:1101.5px;top:497.3px;color:#f06b5c;width:26px;overflow:hidden">未出库</div>
<div style="left:1127px;top:488.0px;width:92px;height:28.25px;background:#ffffff"></div>
<svg style="left:1153.8px;top:498.2px;" width="13" height="12" viewBox="0 0 13 12" fill="none" stroke-linecap="round" stroke-linejoin="round"><path d="M8.9 4.6V2.6Q8.9 1 7.3 1H2.6Q1 1 1 2.6V8.9Q1 10.5 2.6 10.5H5" stroke="rgba(40,42,48,0.72)" stroke-width="1.1"/><path d="M3.1 3.6H7M3.1 5.6H4.2M3.1 7.6H4.2" stroke="rgba(40,42,48,0.72)" stroke-width="1.15"/><circle cx="8.9" cy="8.3" r="2.1" stroke="rgba(40,42,48,0.72)" stroke-width="1.05"/><path d="M10.5 9.9L11.9 11.3" stroke="rgba(40,42,48,0.72)" stroke-width="1.1"/></svg>
<svg style="left:1180.6px;top:498.1px;" width="11" height="11" viewBox="0 0 11 11" fill="none" stroke-linecap="round" stroke-linejoin="round"><rect x="1" y="1" width="3.6" height="3.6" rx="1.5" stroke="rgba(40,42,48,0.72)" stroke-width="1.2"/><rect x="6.3" y="1" width="3.6" height="3.6" rx="1.5" stroke="rgba(40,42,48,0.72)" stroke-width="1.2"/><rect x="1" y="6.3" width="3.6" height="3.6" rx="1.5" stroke="rgba(40,42,48,0.72)" stroke-width="1.2"/><rect x="6.3" y="6.3" width="3.6" height="3.6" rx="1.5" stroke="rgba(40,42,48,0.72)" stroke-width="1.2"/></svg>
<div style="left:1127px;top:167px;width:92px;height:28.5px;background:#e7e9f2"></div>
<div class="hd" style="left:1162px;top:174.7px;">操作</div>
<div style="left:1126px;top:167px;width:1.5px;height:394px;background:rgba(80,90,110,0.07)"></div>
<div style="left:23px;top:517.25px;width:1196px;height:7.25px;background:#ebebed"></div>
<div style="left:23px;top:524.5px;width:1196px;height:30px;background:linear-gradient(180deg,#ede6d4,#e8e3d3)"></div>
<div style="left:121px;top:524.5px;width:1px;height:37px;background:#dcd5c3"></div>
<div class="cell" style="left:36px;top:534.5px;color:#333">合计:</div>
<div class="cell" style="left:828px;top:534.5px;font-weight:bold;color:#222;font-size:12px">11494.17</div>
<div style="left:23px;top:554.5px;width:1196px;height:7px;background:#e9e9eb"></div>
<div style="left:125px;top:557.5px;width:963px;height:6px;background:#88898c;border-radius:3px"></div>
<div style="left:1211px;top:197.5px;width:8px;height:227px;background:rgba(80,85,110,0.5);border-radius:4px 4px 3px 3px"></div>
<div style="left:5px;top:498px;width:18px;height:63px;background:linear-gradient(180deg,rgba(230,230,233,0),rgba(230,230,233,0.85) 55%,rgba(230,230,233,1))"></div>
<div style="left:1219px;top:495px;width:36px;height:66px;background:linear-gradient(180deg,rgba(233,233,236,0),rgba(233,233,236,0.85) 60%,rgba(233,233,236,1))"></div>
<svg style="left:117.5px;top:244.5px;" width="12" height="16" viewBox="0 0 12 16" fill="none" stroke-linecap="round" stroke-linejoin="round"><path d="M1 1V12.2L3.7 9.7L5.6 13.8L7.4 13L5.5 9H9.3Z" fill="#fff" stroke="#3f4656" stroke-width="0.9" stroke-linejoin="miter"/></svg>
</body></html>
